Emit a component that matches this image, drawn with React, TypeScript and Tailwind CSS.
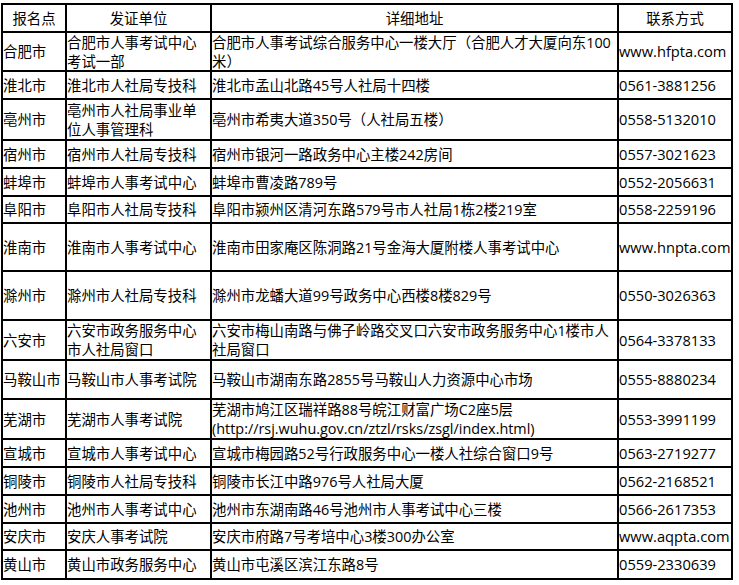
const header = ["报名点", "发证单位", "详细地址", "联系方式"];

type Row = { h: string; city: string; unit: string[]; addr: string[]; contact: string };

const rows: Row[] = [
  { h: "h-[39px]", city: "合肥市", unit: ["合肥市人事考试中心", "考试一部"], addr: ["合肥市人事考试综合服务中心一楼大厅（合肥人才大厦向东100", "米）"], contact: "www.hfpta.com" },
  { h: "h-[28px]", city: "淮北市", unit: ["淮北市人社局专技科"], addr: ["淮北市孟山北路45号人社局十四楼"], contact: "0561-3881256" },
  { h: "h-[41px]", city: "亳州市", unit: ["亳州市人社局事业单", "位人事管理科"], addr: ["亳州市希夷大道350号（人社局五楼）"], contact: "0558-5132010" },
  { h: "h-[28px]", city: "宿州市", unit: ["宿州市人社局专技科"], addr: ["宿州市银河一路政务中心主楼242房间"], contact: "0557-3021623" },
  { h: "h-[28px]", city: "蚌埠市", unit: ["蚌埠市人事考试中心"], addr: ["蚌埠市曹凌路789号"], contact: "0552-2056631" },
  { h: "h-[27px]", city: "阜阳市", unit: ["阜阳市人社局专技科"], addr: ["阜阳市颍州区清河东路579号市人社局1栋2楼219室"], contact: "0558-2259196" },
  { h: "h-[48px]", city: "淮南市", unit: ["淮南市人事考试中心"], addr: ["淮南市田家庵区陈洞路21号金海大厦附楼人事考试中心"], contact: "www.hnpta.com" },
  { h: "h-[49px]", city: "滁州市", unit: ["滁州市人社局专技科"], addr: ["滁州市龙蟠大道99号政务中心西楼8楼829号"], contact: "0550-3026363" },
  { h: "h-[40px]", city: "六安市", unit: ["六安市政务服务中心", "市人社局窗口"], addr: ["六安市梅山南路与佛子岭路交叉口六安市政务服务中心1楼市人", "社局窗口"], contact: "0564-3378133" },
  { h: "h-[39px]", city: "马鞍山市", unit: ["马鞍山市人事考试院"], addr: ["马鞍山市湖南东路2855号马鞍山人力资源中心市场"], contact: "0555-8880234" },
  { h: "h-[40px]", city: "芜湖市", unit: ["芜湖市人事考试院"], addr: ["芜湖市鸠江区瑞祥路88号皖江财富广场C2座5层", "(http://rsj.wuhu.gov.cn/ztzl/rsks/zsgl/index.html)"], contact: "0553-3991199" },
  { h: "h-[28px]", city: "宣城市", unit: ["宣城市人事考试中心"], addr: ["宣城市梅园路52号行政服务中心一楼人社综合窗口9号"], contact: "0563-2719277" },
  { h: "h-[28px]", city: "铜陵市", unit: ["铜陵市人社局专技科"], addr: ["铜陵市长江中路976号人社局大厦"], contact: "0562-2168521" },
  { h: "h-[28px]", city: "池州市", unit: ["池州市人事考试中心"], addr: ["池州市东湖南路46号池州市人事考试中心三楼"], contact: "0566-2617353" },
  { h: "h-[27px]", city: "安庆市", unit: ["安庆人事考试院"], addr: ["安庆市府路7号考培中心3楼300办公室"], contact: "www.aqpta.com" },
  { h: "h-[29px]", city: "黄山市", unit: ["黄山市政务服务中心"], addr: ["黄山市屯溪区滨江东路8号"], contact: "0559-2330639" },
];

// cjk columns render a touch smaller than the contact column
const cell = "flex flex-col justify-center border-r-2 border-b-2 border-black overflow-visible whitespace-nowrap";
const cjk = "text-[14.4px]";
const latin = "text-[14.67px]";

const Lines = ({ lines }: { lines: string[] }) => (
  <>
    {lines.map((l, i) => (
      <span key={i}>{l}</span>
    ))}
  </>
);

export default function App() {
  return (
    <div className="bg-white w-[739px] h-[585px] pt-[3px] pl-px text-black leading-[19px] font-['Open_Sans','Noto_Sans_CJK_SC',sans-serif]">
      <div className="grid grid-cols-[64px_145px_407px_114px] w-fit border-l-2 border-t-2 border-black">
        {header.map((t) => (
          <div key={t} className={`${cell} ${cjk} h-[28px] items-center`}>
            {t}
          </div>
        ))}
        {rows.map((r) => (
          <div key={r.city} className="contents">
            <div className={`${cell} ${cjk} ${r.h}`}>{r.city}</div>
            <div className={`${cell} ${cjk} ${r.h}`}>
              <Lines lines={r.unit} />
            </div>
            <div className={`${cell} ${cjk} ${r.h}`}>
              <Lines lines={r.addr} />
            </div>
            <div className={`${cell} ${latin} ${r.h}`}>{r.contact}</div>
          </div>
        ))}
      </div>
    </div>
  );
}
